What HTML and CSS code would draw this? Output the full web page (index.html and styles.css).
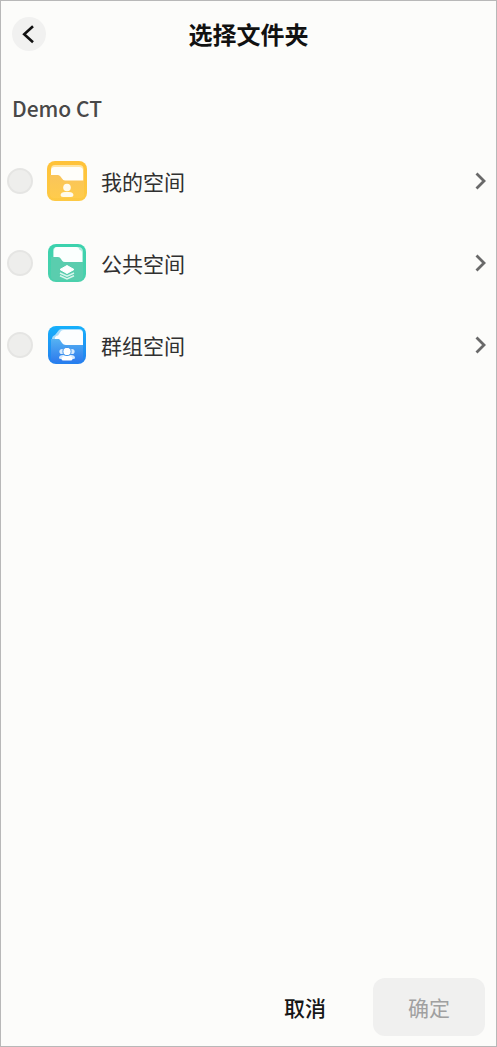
FILE: index.html
```html
<!DOCTYPE html>
<html lang="zh-CN">
<head>
<meta charset="utf-8">
<meta name="viewport" content="width=device-width, initial-scale=1">
<title>选择文件夹</title>
<link rel="stylesheet" href="styles.css">
</head>
<body>
<div class="screen">
  <header class="topbar">
    <button class="back" type="button" aria-label="返回">
      <svg width="34" height="34" viewBox="0 0 34 34" fill="none" stroke="#111" stroke-width="2.6"><path d="M21 9.200 12.200 17.200 21 25.200"/></svg>
    </button>
    <h1 class="title">选择文件夹</h1>
  </header>
  <main class="content">
    <h2 class="team">Demo CT</h2>
    <ul class="list">
      <li class="row">
        <input class="radio" type="radio" name="space" id="mine">
        <label class="space" for="mine">
          <svg class="icon" viewBox="0 0 40 40">
            <defs><linearGradient id="ya" x1="0" y1="0" x2="0" y2="1"><stop offset="0" stop-color="#ffc238"/><stop offset="1" stop-color="#fdc944"/></linearGradient>
            <linearGradient id="yb" x1="0" y1="0" x2="0" y2="1"><stop offset="0" stop-color="#f9c45b"/><stop offset="1" stop-color="#ffcc4c"/></linearGradient></defs>
            <rect width="40" height="40" rx="8" fill="url(#ya)"/>
            <path d="M4 11V8Q4 4 8 4H32Q36.500 4 36.500 8V23H4Z" fill="#ffe5a3"/>
            <path d="M4 13V9.500Q4 6 7.500 6H32Q36 6 36 9.500V23H4Z" fill="#fffefa"/>
            <path d="M3 14H11Q12.500 14 13.500 15.500L15 17.500Q16 19.500 18 19.500H37V34Q37 37 33 37H7Q3 37 3 33Z" fill="url(#yb)"/>
            <circle cx="20" cy="26.500" r="3.800" fill="#fffbed"/><path d="M13.500 34Q14 31 18 31H22Q26 31 26.500 34Q26.500 36 24 36H16Q13.500 36 13.500 34Z" fill="#fffbed"/>
          </svg>
          <span>我的空间</span>
        </label>
        <button class="open" type="button" aria-label="打开我的空间"><svg width="14" height="20" viewBox="0 0 14 20" fill="none" stroke="#696969" stroke-width="2.800"><path d="M2.500 2.500 10 10 2.500 17.500"/></svg></button>
      </li>
      <li class="row">
        <input class="radio" type="radio" name="space" id="public">
        <label class="space" for="public">
          <svg class="icon" viewBox="0 0 40 40">
            <defs><linearGradient id="ga" x1="0" y1="0" x2="0" y2="1"><stop offset="0" stop-color="#3bd2ad"/><stop offset="1" stop-color="#4bd0ac"/></linearGradient></defs>
            <rect x="1" y="1" width="38" height="38" rx="8" fill="url(#ga)"/>
            <path d="M6 14V8Q6 4 10 4H31Q36 4 36 9V20H6Z" fill="#b0ecdc"/>
            <path d="M7 14V8Q7 4 10 4H29Q32 4 32.500 7Q35 7 35 10V20H7Z" fill="#fbfffe"/>
            <path d="M4 14H11Q13 14 14 16L15 17.500Q16 19 18 19H36V33Q36 37 32 37H8Q4 37 4 33Z" fill="#5acdae"/>
            <path d="M20 22.500 27 26.500 20 30.500 13 26.500Z" fill="#fff" stroke="#fff" stroke-linejoin="round"/>
            <path d="M13 30 20 33.200 27 30M13 32.800 20 36 27 32.800" fill="none" stroke="#d7f6ed" stroke-width="1.500"/>
          </svg>
          <span>公共空间</span>
        </label>
        <button class="open" type="button" aria-label="打开公共空间"><svg width="14" height="20" viewBox="0 0 14 20" fill="none" stroke="#696969" stroke-width="2.800"><path d="M2.500 2.500 10 10 2.500 17.500"/></svg></button>
      </li>
      <li class="row">
        <input class="radio" type="radio" name="space" id="group">
        <label class="space" for="group">
          <svg class="icon" viewBox="0 0 40 40">
            <defs><linearGradient id="ba" x1="0" y1="0" x2="0" y2="1"><stop offset="0" stop-color="#16b0fb"/><stop offset="1" stop-color="#257fee"/></linearGradient>
            <linearGradient id="bb" x1="0" y1="0" x2="0" y2="1"><stop offset="0" stop-color="#55b2f3"/><stop offset="1" stop-color="#2d7bed"/></linearGradient></defs>
            <rect x="1" y="1" width="38" height="38" rx="8" fill="url(#ba)"/>
            <path d="M5 14Q5 11 8 10L12 5Q13 4 15 4H32Q36 4 36 8V21H5Z" fill="#a8ddfb"/>
            <path d="M8 13Q8 11 11 10.500L14 6Q15 5 17 5H32Q36 5 36 9V21H8Z" fill="#fcfeff"/>
            <path d="M4 14H12Q13.500 15 14 16.500Q16 20 19 20H36V33Q36 37 32 37H8Q4 37 4 33Z" fill="url(#bb)"/>
            <g fill="#d6eafe"><circle cx="15" cy="26.500" r="2.600"/><circle cx="25" cy="26.500" r="2.600"/><path d="M12 33Q12 30 16 30H24Q28 30 28 33Q28 34 26 34H14Q12 34 12 33Z"/></g>
            <circle cx="20" cy="26.500" r="4.100" fill="#fff" stroke="#4196ed"/>
            <path d="M14.500 34Q15 31 18 31H22Q25 31 25.500 34Q25.500 35.500 23.500 35.500H16.500Q14.500 35.500 14.500 34Z" fill="#fff"/>
          </svg>
          <span>群组空间</span>
        </label>
        <button class="open" type="button" aria-label="打开群组空间"><svg width="14" height="20" viewBox="0 0 14 20" fill="none" stroke="#696969" stroke-width="2.800"><path d="M2.500 2.500 10 10 2.500 17.500"/></svg></button>
      </li>
    </ul>
  </main>
  <footer class="actions">
    <button class="btn cancel" type="button">取消</button>
    <button class="btn confirm" type="button" disabled>确定</button>
  </footer>
</div>
</body>
</html>
```
FILE: styles.css
```css
* { box-sizing: border-box; }
body {
  margin: 0;
  font-family: "Noto Sans CJK SC", sans-serif;
  color: #303030;
}
button { border: 0; padding: 0; background: none; font: inherit; color: inherit; cursor: pointer; }
svg { display: block; }
.screen {
  min-height: 100vh;
  display: flex;
  flex-direction: column;
  background: #fcfcfa;
  border: 1px solid #b8b8b8;
}
.topbar {
  display: grid;
  grid-template-columns: 34px 1fr 34px;
  align-items: center;
  padding: 16px 11px 0;
}
.back { width: 34px; height: 34px; border-radius: 50%; background: #f1f1f0; }
.title { margin: 0; text-align: center; font-size: 24px; line-height: 34px; font-weight: 700; color: #111; }
.content { flex: 1; padding-top: 41px; }
.team { margin: 0 0 16px; padding: 0 11px; font-size: 21px; line-height: 32px; font-weight: 500; color: #484848; }
.list { margin: 0; padding: 0; list-style: none; }
.row { display: flex; align-items: center; height: 82px; padding: 0 8px 0 6px; }
.radio {
  appearance: none;
  flex: none;
  width: 26px;
  height: 26px;
  margin: 0;
  border: 2px solid #e5e5e3;
  border-radius: 50%;
  background: #eeeeec;
}
.radio:checked { border: 8px solid #257fee; }
.space { flex: 1; display: flex; align-items: center; gap: 14px; padding-left: 14px; font-size: 21px; line-height: 32px; }
.icon { width: 40px; height: 40px; }
.open { padding: 8px 0; }
.actions { display: flex; justify-content: flex-end; align-items: center; gap: 12px; padding: 0 11px 10px; }
.btn { width: 112px; height: 58px; border-radius: 12px; font-size: 21px; line-height: 32px; }
.cancel { font-weight: 500; color: #161616; }
.confirm { background: #f0f0ef; color: #a0a0a0; cursor: default; }
```
